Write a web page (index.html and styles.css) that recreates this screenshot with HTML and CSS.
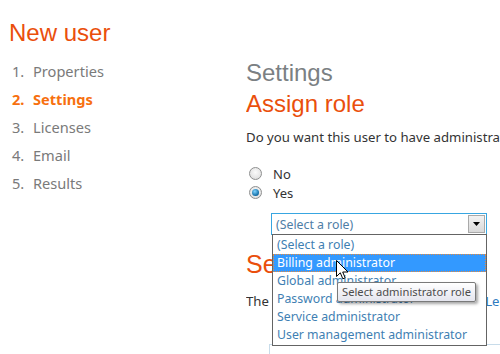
FILE: index.html
```html
<!DOCTYPE html>
<html>
<head>
<meta charset="utf-8">
<link rel="stylesheet" href="styles.css">
</head>
<body>
<div class="page">
  <aside class="side">
    <h1 class="title">New user</h1>
    <ol class="steps">
      <li><span class="num">1.</span>Properties</li>
      <li class="current"><span class="num">2.</span>Settings</li>
      <li><span class="num">3.</span>Licenses</li>
      <li><span class="num">4.</span>Email</li>
      <li><span class="num">5.</span>Results</li>
    </ol>
  </aside>
  <main class="main">
    <h2 class="section">Settings</h2>
    <h3 class="heading">Assign role</h3>
    <p class="text">Do you want this user to have administrator permissions?</p>
    <div class="radios">
      <label class="radio"><span class="dot"></span>No</label>
      <label class="radio"><span class="dot on"></span>Yes</label>
    </div>
    <div class="selectwrap">
      <div class="select">
        <span class="value">(Select a role)</span>
        <span class="arrow"><svg width="7" height="4" viewBox="0 0 7 4"><path d="M0 0h7L3.5 4z" fill="#000"/></svg></span>
      </div>
      <ul class="list">
        <li>(Select a role)</li>
        <li class="hl">Billing administrator</li>
        <li>Global administrator</li>
        <li>Password administrator</li>
        <li>Service administrator</li>
        <li>User management administrator</li>
      </ul>
      <svg class="cursor" width="13" height="20" viewBox="0 0 13 20"><path d="M0.5 0.5v16l3.8-3.7 2.5 6 2.4-1-2.5-5.8h5.3z" fill="#fff" stroke="#000" stroke-width="1" stroke-linejoin="miter"/></svg>
      <div class="tip">Select administrator role</div>
    </div>
    <h3 class="heading sub">Services</h3>
    <p class="text note">The role you assign sets their access. <a class="link">Learn more</a></p>
    <div class="box"></div>
  </main>
</div>
</body>
</html>
```
FILE: styles.css
```css
html, body {
  margin: 0;
  padding: 0;
  background: #fff;
  overflow: hidden;
}
body {
  width: 500px;
  height: 354px;
  font-family: "Segoe UI", "Noto Sans", "Open Sans", sans-serif;
  color: #333;
}
.page {
  display: flex;
  align-items: flex-start;
}
.side {
  width: 237px;
  flex: none;
  padding-left: 9px;
}
.title {
  margin: 19px 0 0;
  font-family: "Liberation Sans", Arial, sans-serif;
  font-weight: normal;
  font-size: 24px;
  line-height: 28px;
  color: #ea4f0c;
}
.steps {
  list-style: none;
  margin: 10px 0 0;
  padding: 0 0 0 3px;
}
.steps li {
  font-size: 14.6px;
  line-height: 28px;
  color: #7a7a7a;
  white-space: nowrap;
}
.steps .num {
  display: inline-block;
  width: 21px;
}
.steps .current {
  color: #f7700f;
  font-weight: bold;
}
.main {
  flex: 1;
  min-width: 0;
  overflow: hidden;
  white-space: nowrap;
}
.section {
  margin: 59px 0 0;
  font-family: "Liberation Sans", Arial, sans-serif;
  font-weight: normal;
  font-size: 24px;
  line-height: 28px;
  color: #7b8083;
}
.heading {
  margin: 3px 0 0;
  font-family: "Liberation Sans", Arial, sans-serif;
  font-weight: normal;
  font-size: 24px;
  line-height: 28px;
  color: #ea4f0c;
}
.heading.sub {
  margin-top: 15px;
  font-size: 25px;
}
.text {
  margin: 10px 0 0;
  font-size: 13.2px;
  line-height: 18px;
  color: #333;
}
.text.note {
  margin-top: 14px;
}
.radios {
  display: flex;
  flex-direction: column;
  margin: 18px 0 0 3px;
}
.radio {
  display: flex;
  align-items: center;
  height: 19px;
  font-size: 13px;
  color: #333;
}
.dot {
  width: 11px;
  height: 11px;
  border-radius: 50%;
  border: 1px solid #8e8f8f;
  background: radial-gradient(circle at 50% 40%, #fbfbfb, #d8d8d8);
  margin-right: 11px;
  position: relative;
}
.dot.on::after {
  content: "";
  position: absolute;
  left: 2px;
  top: 2px;
  width: 7px;
  height: 7px;
  border-radius: 50%;
  background: radial-gradient(circle at 40% 35%, #7fd3ff, #0f6aa3 70%, #0b3f66);
}
.selectwrap {
  position: relative;
  margin: 11px 0 0 25px;
  width: 216px;
}
.select {
  height: 20px;
  border: 1px solid #38a6e1;
  display: flex;
  align-items: center;
  justify-content: space-between;
  padding-left: 4px;
  background: #fff;
}
.value {
  font-size: 12.3px;
  color: #4f7ea6;
}
.arrow {
  width: 17px;
  height: 18px;
  margin-right: 1px;
  box-sizing: border-box;
  border: 1px solid #a9a9a9;
  background: linear-gradient(#f2f2f2, #d9d9d9);
  display: flex;
  align-items: center;
  justify-content: center;
}
.list {
  position: absolute;
  left: 1px;
  top: 21px;
  width: 213px;
  margin: 0;
  padding: 1px 0;
  list-style: none;
  border: 1px solid #646464;
  background: #fff;
  z-index: 2;
}
.list li {
  height: 18px;
  line-height: 16px;
  padding-left: 3px;
  font-size: 12.3px;
  color: #3f7fb3;
  box-sizing: border-box;
  border: 1px dotted transparent;
}
.list li.hl {
  background: #3399ff;
  color: #fff;
  border-color: #e88a3c;
}
.cursor {
  position: absolute;
  left: 65px;
  top: 47px;
  z-index: 4;
}
.tip {
  position: absolute;
  left: 66px;
  top: 69px;
  height: 18px;
  padding: 0 4px;
  border: 1px solid #7a7a7a;
  border-radius: 2px;
  background: linear-gradient(#ffffff, #e4e5ee);
  box-shadow: 2px 2px 3px rgba(0, 0, 0, 0.35);
  font-size: 11.2px;
  line-height: 18px;
  color: #4c4c4c;
  z-index: 5;
}
.link {
  margin-left: 8px;
  color: #2f7bbf;
}
.box {
  margin: 34px 0 0 23px;
  height: 20px;
  border: 1px solid #c8dcea;
  border-right: none;
}
```
